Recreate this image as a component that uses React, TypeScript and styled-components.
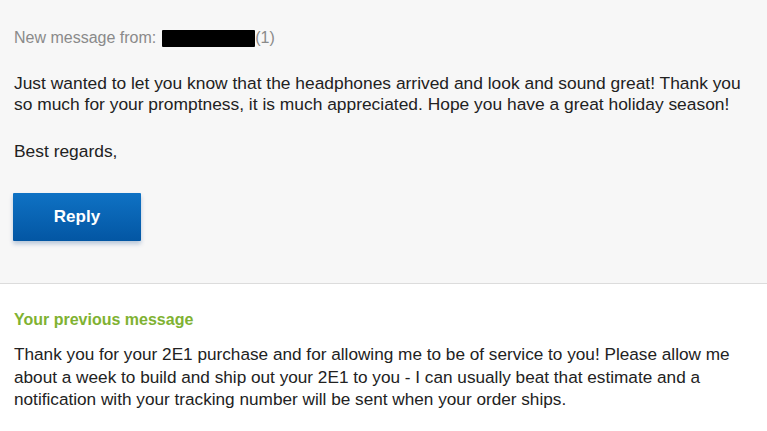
import React from "react";
import styled, { createGlobalStyle } from "styled-components";

const GlobalStyle = createGlobalStyle`
  html, body {
    margin: 0;
    padding: 0;
    background: #ffffff;
    font-family: "Liberation Sans", Arial, sans-serif;
  }
`;

const Page = styled.div`
  width: 767px;
  height: 431px;
  overflow: hidden;
`;

const Incoming = styled.section`
  background: #f7f7f7;
  border-bottom: 1px solid #dcdcdc;
  padding: 28px 14px 44px 14px;
  height: 284px;
  box-sizing: border-box;
`;

const FromLine = styled.div`
  display: flex;
  align-items: center;
  font-size: 16px;
  color: #8a8a8a;
  line-height: 20px;
`;

const Redacted = styled.span`
  display: inline-block;
  width: 93px;
  height: 17px;
  background: #000;
  margin-left: 6px;
  border-radius: 1px;
`;

const Body = styled.p<{ $top: number }>`
  margin: 0;
  font-size: 17.4px;
  line-height: 21px;
  color: #222;
  margin-top: ${({ $top }) => $top}px;
`;

const ReplyButton = styled.button`
  display: block;
  margin: 31px 0 0 -1px;
  width: 128px;
  height: 48px;
  border: none;
  border-radius: 1px;
  background: linear-gradient(#0f72c4, #0356a3);
  color: #fff;
  font-family: "Liberation Sans", Arial, sans-serif;
  font-weight: bold;
  font-size: 17px;
  box-shadow: 0 3px 4px rgba(0, 60, 130, 0.25);
  cursor: pointer;
`;

const Previous = styled.section`
  padding: 26px 14px 0 14px;
`;

const PrevTitle = styled.h3`
  margin: 0;
  font-size: 16px;
  font-weight: bold;
  color: #7fb232;
  line-height: 20px;
`;

const PrevBody = styled.p`
  margin: 13px 0 0 0;
  font-size: 17.2px;
  line-height: 22.5px;
  color: #222;
`;

export default function App() {
  return (
    <Page>
      <GlobalStyle />
      <Incoming>
        <FromLine>
          New message from: <Redacted />(1)
        </FromLine>
        <Body $top={25}>
          Just wanted to let you know that the headphones arrived and look and
          sound great! Thank you so much for your promptness, it is much
          appreciated. Hope you have a great holiday season!
        </Body>
        <Body $top={26}>Best regards,</Body>
        <ReplyButton>Reply</ReplyButton>
      </Incoming>
      <Previous>
        <PrevTitle>Your previous message</PrevTitle>
        <PrevBody>
          Thank you for your 2E1 purchase and for allowing me to be of service
          to you! Please allow me about a week to build and ship out your 2E1 to
          you - I can usually beat that estimate and a notification with your
          tracking number will be sent when your order ships.
        </PrevBody>
      </Previous>
    </Page>
  );
}
